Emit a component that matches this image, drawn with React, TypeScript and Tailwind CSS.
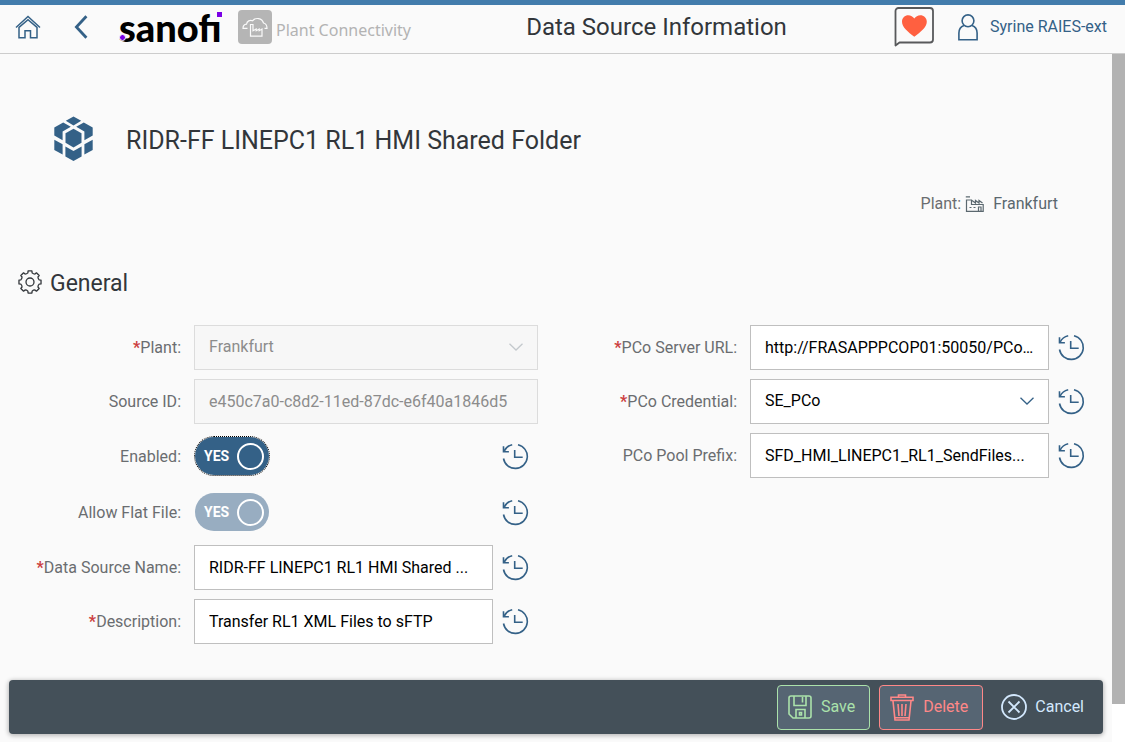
import React from "react";

function HomeIcon() {
  return (
    <svg width="26" height="24" viewBox="0 0 26 24" fill="none" stroke="#346187" strokeWidth="1.5" aria-hidden="true">
      <path d="M1 12.5 13 1.5l12 11" />
      <path d="M4 12.4V22.7h6v-6.9h5.5v6.9H22V12.4L13 4.8z" />
    </svg>
  );
}

function BackIcon() {
  return (
    <svg width="14" height="24" viewBox="0 0 14 24" fill="none" stroke="#346187" strokeWidth="2.8" aria-hidden="true">
      <path d="M12.4 1.2 2.4 12l10 10.8" />
    </svg>
  );
}

function PlantBadge() {
  return (
    <svg width="34" height="34" viewBox="0 0 34 34" fill="none" stroke="#fafafa" strokeWidth="1.2" aria-hidden="true">
      <rect width="34" height="34" rx="4" fill="#b5b5b5" stroke="none" />
      <path d="M9.500 18.400H5c0-2.600 1.300-4 3.500-4.200.4-3.200 3.500-4.600 6-3.400 3-3.600 9.500-3 11 2.200 2.300.6 3.500 2.600 3.500 5.400H26.500" />
      <path d="M12.500 26.200V14.500h2.500v6.200l3.200-1.700v1.700l3-1.700v1.700l2.800-1.700v7.200z" />
    </svg>
  );
}

function HeartBubble() {
  return (
    <svg width="40" height="40" viewBox="0 0 40 40" fill="none" aria-hidden="true">
      <path d="M1.500 38.500V4a3 3 0 0 1 3-3h31.500a3 3 0 0 1 3 3v28.500a3 3 0 0 1-3 3H5.500z" fill="#fafafa" stroke="#58595b" strokeWidth="1.800" strokeLinejoin="round" />
      <path d="M20.300 29.800C14 25 8 20.400 8 14.800c0-4.200 3-6.600 6.200-6.600 2.600 0 4.700 1.300 6.100 3.300 1.400-2 3.500-3.300 6.100-3.300 3.200 0 6.400 2.400 6.400 6.600 0 5.600-6.200 10.200-12.500 15z" fill="#ff6040" />
    </svg>
  );
}

function UserIcon() {
  return (
    <svg width="20" height="27" viewBox="0 0 20 27" fill="none" stroke="#346187" strokeWidth="1.600" aria-hidden="true">
      <circle cx="10" cy="6.800" r="5.900" />
      <path d="M6 11.500C2.500 12.800.9 15.500.9 19v6.700h18.200V19c0-3.500-1.600-6.200-5.100-7.500" />
    </svg>
  );
}

function CubeIcon() {
  return (
    <svg width="40" height="46" viewBox="0 0 40 46" fill="#346187" aria-hidden="true">
      <path d="M19.500.4 27.200 4.800 19.500 9.400 11.800 4.800z" />
      <path d="M9.200 6.400 16.800 10.800 8.600 15.500V24.200L.3 19.600V11.500z" />
      <path d="M29.800 6.400 22.200 10.800 30.400 15.500V24.200L38.700 19.600V11.500z" />
      <path d="M19.500 12.800 27.500 17.300V26.800L19.500 31.600 11.500 26.800V17.300z" />
      <path d="M.3 23.700 8.600 28.300V38.600L.3 33.900z" />
      <path d="M38.700 23.700 30.400 28.300V38.600L38.700 33.900z" />
      <path d="M11.400 30.500 19.500 35 27.600 30.500V40.400L19.500 45 11.400 40.400z" />
    </svg>
  );
}

function FactoryIcon() {
  return (
    <svg width="20" height="17" viewBox="0 0 20 17" fill="none" stroke="#5b686f" strokeWidth="1.200" aria-hidden="true">
      <path d="M.8.800H5M1.500 4v11.400h16.700V8.500H6.500V4z" />
      <path d="M7 4.500l3.500 2.500V4.500L14 7V4.500l3.500 2.500M4.500 11.500h2M8.500 11.500h2M13.500 15v-4h2.500v4" />
    </svg>
  );
}

function GearIcon() {
  const steps = Array.from({ length: 8 }, (_, i) => i * 45);
  const point = (deg: number, r: number) => {
    const a = (deg * Math.PI) / 180;
    return `${(12 + r * Math.sin(a)).toFixed(2)} ${(12 - r * Math.cos(a)).toFixed(2)}`;
  };
  const d = steps
    .map((s, i) => `${i ? "L" : "M"}${point(s - 10, 11.2)}L${point(s + 10, 11.2)}L${point(s + 13, 9.4)}Q${point(s + 22.5, 8.6)} ${point(s + 32, 9.4)}`)
    .join("");
  return (
    <svg width="24" height="24" viewBox="0 0 24 24" fill="none" stroke="#32363a" strokeWidth="1.300" strokeLinejoin="round" aria-hidden="true">
      <path d={`${d}Z`} />
      <circle cx="12" cy="12" r="4" />
    </svg>
  );
}

function HistoryButton({ label }: { label: string }) {
  return (
    <button type="button" aria-label={`History of ${label}`} className="flex h-[45px] w-[45px] shrink-0 items-center justify-center">
      <svg width="27" height="27" viewBox="0 0 27 27" fill="none" stroke="#346187" strokeWidth="1.600" aria-hidden="true">
        <path d="M1.500 15.500A12 12 0 1 0 16 1.700M10.200 1.800A12 12 0 0 0 2 8.300" />
        <path d="M1.500 3.300V8.700H6.900M12.700 7V14.200H20.700" />
      </svg>
    </button>
  );
}

function ChevronDown() {
  return (
    <svg width="14" height="8" viewBox="0 0 14 8" fill="none" stroke="currentColor" strokeWidth="1.300" aria-hidden="true">
      <path d="M.5.700 7 7l6.500-6.300" />
    </svg>
  );
}

type RowProps = { id: string; label: string; required?: boolean; tall?: boolean; history?: boolean; children: React.ReactNode };

function Row({ id, label, required, tall, history, children }: RowProps) {
  return (
    <div className={`grid grid-cols-[181px_1fr] items-center gap-[13px] pr-[18px] ${tall ? "h-14" : "h-[54px]"}`}>
      <label htmlFor={id} className="pt-0.5 text-right text-[#6a6d70]">
        {required && <span className="font-bold text-[#cc4040]">*</span>}
        {label}:
      </label>
      <div className="flex min-w-0 items-center">
        <div className="min-w-0 flex-1">{children}</div>
        {history && <HistoryButton label={label} />}
      </div>
    </div>
  );
}

function TextBox({ id, value, disabled }: { id: string; value: string; disabled?: boolean }) {
  return (
    <input
      id={id}
      defaultValue={value}
      disabled={disabled}
      className="block h-[45px] w-full truncate border border-[#bfbfbf] bg-white px-3.5 text-black disabled:border-[#dcdcdc] disabled:bg-[#f7f7f7] disabled:text-[#8c8c8c]"
    />
  );
}

function SelectBox({ id, value, disabled }: { id: string; value: string; disabled?: boolean }) {
  return (
    <div className="relative">
      <select
        id={id}
        disabled={disabled}
        className="block h-[45px] w-full appearance-none border border-[#bfbfbf] bg-white px-3.5 text-black opacity-100 disabled:border-[#dcdcdc] disabled:bg-[#f7f7f7] disabled:text-[#8c8c8c]"
      >
        <option>{value}</option>
      </select>
      <span className={`pointer-events-none absolute inset-y-0 right-[15px] flex items-center ${disabled ? "text-[#c4c9cd]" : "text-[#346187]"}`}>
        <ChevronDown />
      </span>
    </div>
  );
}

function Toggle({ id, disabled, focused }: { id: string; disabled?: boolean; focused?: boolean }) {
  return (
    <button
      id={id}
      type="button"
      role="switch"
      aria-checked="true"
      disabled={disabled}
      className={`ml-px flex h-[38px] w-[74px] items-center justify-between rounded-full pr-[5px] pl-[9px] text-sm font-bold text-white ${
        disabled ? "bg-[#98adc1]" : "bg-[#346187]"
      } ${focused ? "outline-1 outline-dotted outline-black" : ""}`}
    >
      YES
      <span className="h-[27px] w-[27px] rounded-full border-2 border-white" />
    </button>
  );
}

function Header() {
  return (
    <header className="flex h-[54px] items-center border-t-[5px] border-b border-t-[#427cac] border-b-[#cccccc] pr-[18px] pb-1 pl-[15px]">
      <button type="button" aria-label="Home">
        <HomeIcon />
      </button>
      <button type="button" aria-label="Back" className="ml-[33px]">
        <BackIcon />
      </button>
      <span
        role="img"
        aria-label="sanofi"
        className="relative ml-[31px] flex h-12 w-[103px] items-center font-['Lato',sans-serif] text-[38px] leading-none font-black text-black"
      >
        sanofı
        <span className="absolute top-[9px] right-0 h-[5px] w-[5px] bg-[#7a00e6]" />
        <span className="absolute bottom-2.5 left-0 h-[7px] w-[7px] rounded-full border border-[#fafafa] bg-[#7a00e6]" />
      </span>
      <div className="ml-4 flex items-center gap-1 font-['Noto_Sans',sans-serif] text-[#b3b3b3]">
        <PlantBadge />
        <span className="pt-1.5">Plant Connectivity</span>
      </div>
      <h1 className="flex-1 pl-2 text-center text-2xl">Data Source Information</h1>
      <button type="button" aria-label="Feedback">
        <HeartBubble />
      </button>
      <button type="button" className="ml-6 flex items-center gap-3 text-[#346187]">
        <UserIcon />
        Syrine RAIES-ext
      </button>
    </header>
  );
}

function Toolbar() {
  return (
    <div className="mx-[9px] mb-2 flex h-[54px] shrink-0 items-center justify-end gap-[9px] rounded bg-[#445059] pr-[5px] shadow-[0_1px_4px_1px_rgba(0,0,0,0.25)]">
      <button type="button" className="flex h-[45px] items-center gap-[9px] rounded-sm border border-[#abe2ab] bg-[#566573] pr-3.5 pl-2.5 text-[#abe2ab]">
        <svg width="24" height="24" viewBox="0 0 24 24" fill="none" stroke="currentColor" strokeWidth="1.600" aria-hidden="true">
          <path d="M3 1h18a2 2 0 0 1 2 2v18a2 2 0 0 1-2 2H5l-4-4V3a2 2 0 0 1 2-2z" />
          <path d="M6 1v9.500h12V1M14.500 2v5.500M8 23v-8.500h9V23M11.500 17.500h2v2.500h-2z" />
        </svg>
        Save
      </button>
      <button type="button" className="flex h-[45px] items-center gap-[9px] rounded-sm border border-[#ff8888] bg-[#566573] pr-3.5 pl-2.5 text-[#ff8888]">
        <svg width="24" height="27" viewBox="0 0 24 27" fill="none" stroke="currentColor" strokeWidth="1.600" aria-hidden="true">
          <path d="M8.500 3V1h7v2M1 6.500V3.200h22v3.300z" />
          <path d="M3 7l2 19h14l2-19M8 10l1 12M12 10v12M16 10l-1 12M4.500 23.700h15" />
        </svg>
        Delete
      </button>
      <button type="button" className="flex h-[45px] items-center gap-2 pr-3.5 pl-[9px] text-[#d3e8fd]">
        <svg width="26" height="26" viewBox="0 0 26 26" fill="none" stroke="currentColor" strokeWidth="1.800" aria-hidden="true">
          <circle cx="13" cy="13" r="12" />
          <path d="M7.500 7.500l11 11M18.500 7.500l-11 11" />
        </svg>
        Cancel
      </button>
    </div>
  );
}

export default function App() {
  return (
    <div className="flex min-h-screen flex-col bg-[#fafafa] font-['Roboto','Open_Sans',sans-serif] text-base text-[#32363a]">
      <Header />
      <div className="flex flex-1">
        <div className="flex min-w-0 flex-1 flex-col">
          <main className="flex-1">
            <div className="flex items-center gap-8 pt-[62px] pl-[54px]">
              <CubeIcon />
              <h2 className="pt-1 text-[25px] leading-8">RIDR-FF LINEPC1 RL1 HMI Shared Folder</h2>
            </div>
            <div className="mt-[30px] flex items-center justify-end pr-[54px] text-[#6a6d70]">
              Plant:
              <span className="ml-1 flex items-center gap-2 text-[#5b686f]">
                <FactoryIcon />
                Frankfurt
              </span>
            </div>
            <section>
              <h3 className="mt-11 flex h-12 items-center gap-2 pl-[18px] text-[23px]">
                <span className="pb-1">
                  <GearIcon />
                </span>
                General
              </h3>
              <form className="grid grid-cols-2 pt-3">
                <div>
                  <Row id="plant" label="Plant" required>
                    <SelectBox id="plant" value="Frankfurt" disabled />
                  </Row>
                  <Row id="source" label="Source ID">
                    <TextBox id="source" value="e450c7a0-c8d2-11ed-87dc-e6f40a1846d5" disabled />
                  </Row>
                  <Row id="enabled" label="Enabled" tall history>
                    <Toggle id="enabled" focused />
                  </Row>
                  <Row id="flat" label="Allow Flat File" tall history>
                    <Toggle id="flat" disabled />
                  </Row>
                  <Row id="name" label="Data Source Name" required history>
                    <TextBox id="name" value="RIDR-FF LINEPC1 RL1 HMI Shared ..." />
                  </Row>
                  <Row id="description" label="Description" required history>
                    <TextBox id="description" value="Transfer RL1 XML Files to sFTP" />
                  </Row>
                </div>
                <div>
                  <Row id="url" label="PCo Server URL" required history>
                    <TextBox id="url" value="http://FRASAPPPCOP01:50050/PCo..." />
                  </Row>
                  <Row id="credential" label="PCo Credential" required history>
                    <SelectBox id="credential" value="SE_PCo" />
                  </Row>
                  <Row id="prefix" label="PCo Pool Prefix" history>
                    <TextBox id="prefix" value="SFD_HMI_LINEPC1_RL1_SendFiles..." />
                  </Row>
                </div>
              </form>
            </section>
          </main>
          <Toolbar />
        </div>
        <div className="w-[13px] bg-white pb-[38px]">
          <div className="h-full bg-[#b2b2b2]" />
        </div>
      </div>
    </div>
  );
}
